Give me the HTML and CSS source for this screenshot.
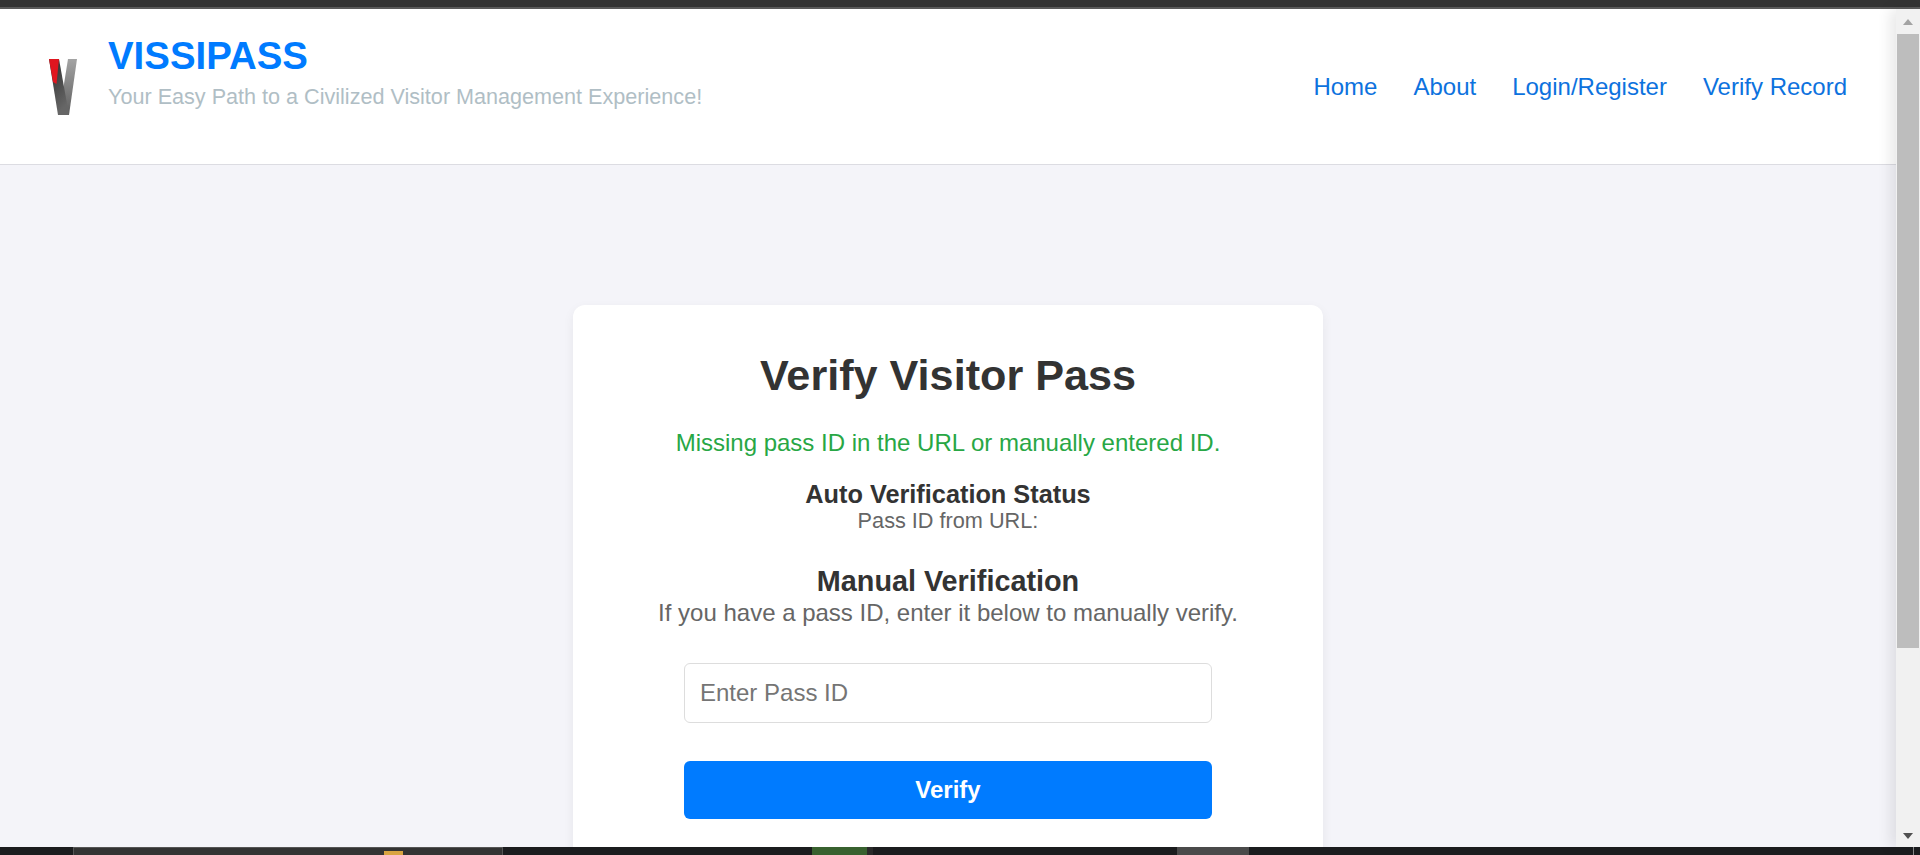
FILE: index.html
```html
<!DOCTYPE html>
<html lang="en">
<head>
  <meta charset="UTF-8" />
  <title>Verify Visitor Pass</title>
  <link rel="stylesheet" href="styles.css">
</head>
<body>
  <div class="top-strip"></div>

  <div class="window">
    <div class="page">
      <!-- Header -->
      <header class="site-header">
        <div class="brand">
          <svg class="brand-logo" viewBox="0 0 28 56" aria-label="VissiPass logo">
            <defs>
              <linearGradient id="leftStroke" x1="0" y1="0" x2="0.4" y2="1">
                <stop offset="0" stop-color="#2a2a2a" />
                <stop offset="1" stop-color="#666" />
              </linearGradient>
              <linearGradient id="rightStroke" x1="0" y1="0" x2="0" y2="1">
                <stop offset="0" stop-color="#a4a4a4" />
                <stop offset="1" stop-color="#5c5c5c" />
              </linearGradient>
            </defs>
            <polygon points="19,0 28,0 20,56 10,56" fill="url(#rightStroke)" />
            <polygon points="0,0 10,0 20,56 9,56" fill="url(#leftStroke)" />
            <polygon points="0,0 10,0 7.5,25 4,23" fill="#e0161f" />
          </svg>
          <div class="brand-text">
            <div class="brand-name">VISSIPASS</div>
            <div class="brand-tag">Your Easy Path to a Civilized Visitor Management Experience!</div>
          </div>
        </div>
        <nav class="nav-links">
          <a href="#">Home</a>
          <a href="#">About</a>
          <a href="#">Login/Register</a>
          <a href="#">Verify Record</a>
        </nav>
      </header>

      <main class="content">
        <section class="verify-card">
          <h1>Verify Visitor Pass</h1>
          <p class="status-msg">Missing pass ID in the URL or manually entered ID.</p>
          <h3>Auto Verification Status</h3>
          <p class="muted small">Pass ID from URL:</p>
          <h2>Manual Verification</h2>
          <p class="muted">If you have a pass ID, enter it below to manually verify.</p>
          <form class="verify-form">
            <input type="text" placeholder="Enter Pass ID" />
            <button type="button">Verify</button>
          </form>
        </section>
      </main>
    </div>

    <div class="scrollbar">
      <span class="arrow-up"></span>
      <div class="scroll-track"><div class="scroll-thumb"></div></div>
      <span class="arrow-down"></span>
    </div>
  </div>

  <div class="taskbar">
    <div class="task-window"><span class="task-icon"></span></div>
    <div class="task-green"></div>
    <div class="task-grey"></div>
    <div class="task-line"></div>
  </div>
</body>
</html>
```

FILE: styles.css
```css
* { box-sizing: border-box; }

body {
  margin: 0;
  height: 855px;
  overflow: hidden;
  display: flex;
  flex-direction: column;
  background: #1b1c1e;
  font-family: "Liberation Sans", Arial, sans-serif;
}

.top-strip {
  height: 9px;
  flex: none;
  background: #333;
  border-bottom: 2px solid #5a5a5a;
}

.window {
  flex: 1;
  min-height: 0;
  display: flex;
}

.page {
  flex: 1;
  min-width: 0;
  overflow: hidden;
  background: #f4f4f9;
}

/* Header */
.site-header {
  height: 156px;
  padding: 0 49px 0 49px;
  background: #fff;
  border-bottom: 1px solid #dcdce2;
  display: flex;
  align-items: center;
  justify-content: space-between;
}

.brand { display: flex; align-items: center; gap: 31px; }
.brand-logo { width: 28px; height: 56px; filter: blur(0.4px); }
.brand-text { margin-bottom: 28px; }
.brand-name { font-size: 38.4px; font-weight: bold; color: #007bff; line-height: 42px; }
.brand-tag { font-size: 21.6px; color: #b0bec5; line-height: 26px; margin-top: 7px; }

.nav-links { display: flex; gap: 36px; }
.nav-links a { font-size: 24px; color: #0d72de; text-decoration: none; }

/* Card */
.content { display: flex; justify-content: center; padding-top: 140px; }

.verify-card {
  width: 750px;
  height: 600px;
  padding: 45px 111px;
  background: #fff;
  border-radius: 12px;
  box-shadow: 0 4px 12px rgba(0, 0, 0, 0.06);
  text-align: center;
  color: #333;
}

h1 { font-size: 43.2px; margin: 0 0 29px; line-height: 50px; }
h2 { font-size: 28.8px; margin: 31px 0 0; line-height: 35px; }
h3 { font-size: 25.3px; margin: 0; line-height: 29px; }

p { margin: 0; }
.status-msg { font-size: 24px; color: #28a745; line-height: 28px; margin: 0 -60px 23px; }
.muted { font-size: 24px; color: #666; line-height: 28px; margin: 0 -60px; }
.muted.small { font-size: 21.7px; line-height: 24px; }

.verify-form { margin-top: 36px; }

.verify-form input {
  display: block;
  width: 100%;
  height: 60px;
  padding: 0 15px;
  font: inherit;
  font-size: 24px;
  border: 1px solid #ddd;
  border-radius: 6px;
  margin-bottom: 38px;
}

.verify-form input::placeholder { color: #757575; }

.verify-form button {
  display: block;
  width: 100%;
  height: 58px;
  background: #007bff;
  color: #fff;
  font: inherit;
  font-size: 24px;
  font-weight: bold;
  border: none;
  border-radius: 6px;
}

/* Scrollbar */
.scrollbar {
  width: 24px;
  flex: none;
  background: #f1f1f1;
  box-shadow: -6px 0 14px rgba(0, 0, 0, 0.09);
  position: relative;
  display: flex;
  flex-direction: column;
  align-items: center;
  padding: 10px 1px 8px;
}

.scroll-track { flex: 1; width: 100%; padding-top: 9px; }
.scroll-thumb { height: 614px; background: #bdbdbd; }

.arrow-up {
  width: 0; height: 0;
  border: 5px solid transparent;
  border-top: 0;
  border-bottom: 6px solid #a3a3a3;
}

.arrow-down {
  width: 0; height: 0;
  border: 5px solid transparent;
  border-bottom: 0;
  border-top: 6px solid #505050;
}

/* Bottom strip */
.taskbar {
  height: 8px;
  flex: none;
  display: flex;
  padding-left: 73px;
  background: #1b1c1e;
}

.task-window {
  width: 430px;
  background: #333;
  border: 1px solid #555;
  border-bottom: 0;
  padding: 3px 0 0 310px;
}

.task-icon { display: block; width: 19px; height: 4px; background: #d9a441; }
.task-green { width: 61px; margin-left: 309px; background: #38612f; border-right: 6px solid #2a2a2a; }
.task-grey { width: 72px; margin-left: 304px; background: #4a4a4a; }
.task-line { width: 1px; margin-left: 664px; background: #888; }
```
